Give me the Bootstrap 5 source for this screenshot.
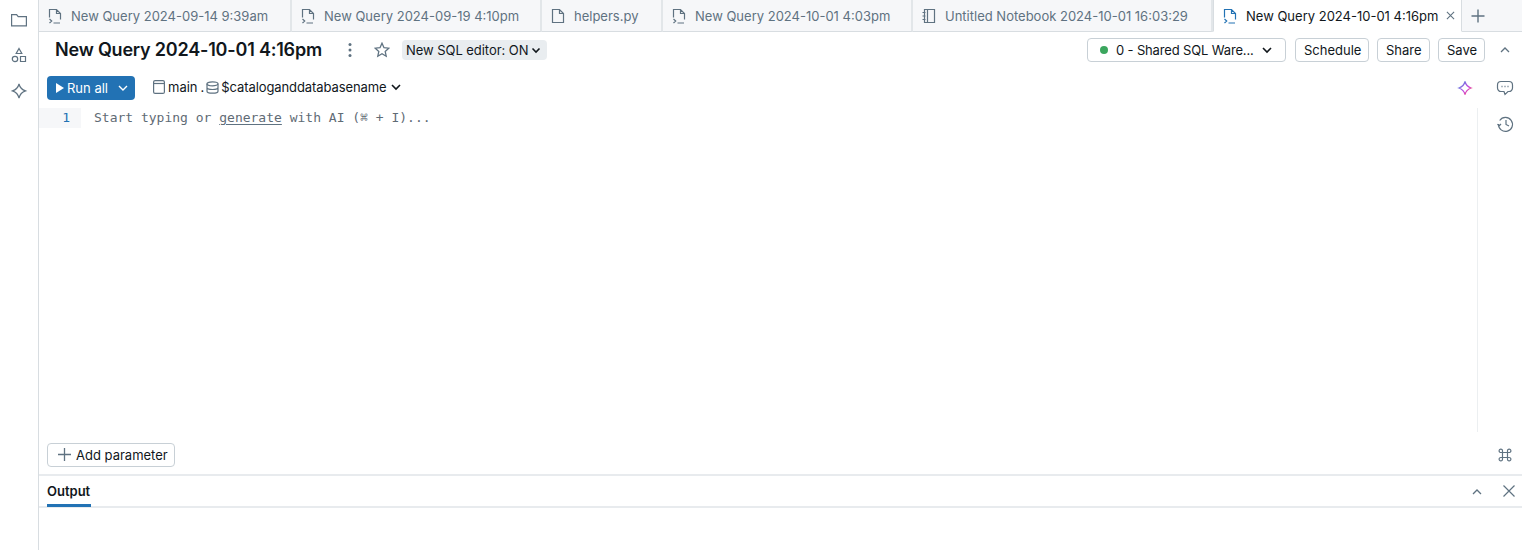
<!doctype html>
<html lang="en"><head><meta charset="utf-8"><title>SQL Editor</title>
<link href="https://cdn.jsdelivr.net/npm/bootstrap@5.3.0/dist/css/bootstrap.min.css" rel="stylesheet">
<style>
html,body{height:550px;overflow:hidden;background:#fff}
body{font-family:Inter,"Noto Sans",sans-serif;font-size:13px;color:#11171c;line-height:20px}
svg{display:block;flex:none;fill:none;stroke:currentColor;stroke-width:1.2}
.rail{width:39px;border-right:1px solid #d8dde1;padding:11px 1px 0 0;gap:17.500px;color:#5f7281}
.tabbar{height:32px;background:#f6f7f9;border-bottom:1px solid #d8dde1;flex:none}
.qtab{height:32px;border-right:2px solid #e2e6e9;padding-left:8px;gap:8px;color:#5f7281;white-space:nowrap;border-bottom:1px solid #d8dde1}
.qtab.on{background:#fff;color:#11171c;border-bottom-color:#fff;border-left:1px solid #d8dde1;border-right:1px solid #d8dde1}
.qtab.on svg.fi{color:#2272b4}
.addtab{width:35px;color:#5f7281;padding-left:8px}
.title{font-size:18px;font-weight:600;line-height:24px;letter-spacing:-.2px;margin-left:16px;width:267px;white-space:nowrap}
.head{height:38px;flex:none;padding-bottom:2px}
.pill{background:#e9edf0;border-radius:4px;height:20px;padding:0 6px 0 4px;margin-left:12px;gap:3px;white-space:nowrap;letter-spacing:-.05px}
.obtn{height:24px;border:1px solid #c8d0d6;border-radius:4px;background:#fff;color:#11171c;font-size:13px;line-height:22px;padding:0 8px;white-space:nowrap}
.runbar{height:38px;flex:none;padding:3px 0 0 8px}
.runbtn{width:88px;height:24px;background:#2272b4;color:#fff;border-radius:4px;padding:0 7px 0 9px}
.crumb{margin-left:18px;gap:3px;white-space:nowrap;color:#11171c}
.crumb svg{color:#5f7281}
.crumbname{letter-spacing:-.09px}
.gutter{width:42px;height:20px;background:#f6f7f9;color:#2272b4;text-align:right;padding-right:11px;flex:none}
.code{font-family:"DejaVu Sans Mono","Liberation Mono",monospace;font-size:13px;line-height:20px}
.hint{color:#5f6b75;margin-left:13px;white-space:nowrap}
.hint u{text-decoration-color:#5f7281;text-underline-offset:2px}
.sideicons{width:44px;flex:none;color:#5f7281;padding:7px 0 0 10px}
.editor{flex:1 1 auto;min-height:0}
.gutline{width:1px;background:#eceff1;flex:none}
.param{height:42px;flex:none;padding:3px 0 0 8px}
.outbar{height:34px;flex:none;border-top:2px solid #e8ebee;border-bottom:2px solid #e8ebee}
.outlabel{font-weight:600;margin-left:8px;height:31px;border-bottom:3px solid #2272b4;width:44px;white-space:nowrap;line-height:30px}
.gray{color:#5f7281}
</style></head><body>
<div class="d-flex" style="height:550px">
 <nav class="rail d-flex flex-column align-items-center flex-shrink-0">
  <svg width="18" height="18" viewBox="0 0 18 18"><path d="M1.600 3.600h5l1.600 2h8.200v9.200H1.600z"/></svg>
  <svg width="18" height="18" viewBox="0 0 18 18"><path d="M9 1.500l2.800 5H6.200z"/><circle cx="5" cy="12" r="2.700"/><path d="M10.500 9.500h5v5h-5z"/></svg>
  <svg width="18" height="18" viewBox="0 0 18 18"><path d="M9 2c1 4 2.500 5.500 6.500 6.900C11.500 10.300 10 11.800 9 16 8 11.800 6.500 10.300 2.500 8.900 6.500 7.500 8 6 9 2z"/></svg>
 </nav>
 <div class="flex-grow-1 d-flex flex-column" style="min-width:0">
  <div class="tabbar d-flex">
   <div class="qtab d-flex align-items-center" style="width:253px"><svg class="fi" width="16" height="16" viewBox="0 0 16 16"><use href="#qi"/></svg><span>New Query 2024-09-14 9:39am</span></div>
   <div class="qtab d-flex align-items-center" style="width:250px"><svg class="fi" width="16" height="16" viewBox="0 0 16 16"><use href="#qi"/></svg><span>New Query 2024-09-19 4:10pm</span></div>
   <div class="qtab d-flex align-items-center" style="width:121px"><svg class="fi" width="16" height="16" viewBox="0 0 16 16"><path d="M2.500 1.500h7l4 4v9h-11zM9.500 1.500v4h4"/></svg><span>helpers.py</span></div>
   <div class="qtab d-flex align-items-center" style="width:250px"><svg class="fi" width="16" height="16" viewBox="0 0 16 16"><use href="#qi"/></svg><span>New Query 2024-10-01 4:03pm</span></div>
   <div class="qtab d-flex align-items-center" style="width:300px"><svg class="fi" width="16" height="16" viewBox="0 0 16 16"><path d="M3.500 1.500h10v13h-10zM6.500 1.500v13M1.500 4.500h3M1.500 8h3M1.500 11.500h3"/></svg><span>Untitled Notebook 2024-10-01 16:03:29</span></div>
   <div class="qtab on d-flex align-items-center" style="width:249px"><svg class="fi" width="16" height="16" viewBox="0 0 16 16"><use href="#qi"/></svg><span>New Query 2024-10-01 4:16pm</span><svg class="ms-auto me-2 gray" width="9" height="9" viewBox="0 0 10 10"><path d="M1 1l8 8M9 1l-8 8"/></svg></div>
   <div class="addtab d-flex align-items-center"><svg width="16" height="16" viewBox="0 0 16 16" style="stroke-width:1.400"><path d="M8 1.500v13M1.500 8h13"/></svg></div>
  </div>
  <div class="head d-flex align-items-center">
   <div class="title">New Query 2024-10-01 4:16pm</div>
   <svg class="gray" width="16" height="16" viewBox="0 0 16 16" style="fill:currentColor;stroke:none;margin-left:20px"><circle cx="8" cy="2.500" r="1.500"/><circle cx="8" cy="8" r="1.500"/><circle cx="8" cy="13.500" r="1.500"/></svg>
   <svg class="gray" width="16" height="16" viewBox="0 0 16 16" style="margin-left:16px;stroke-width:1.300"><path d="M8 1.200l2 4.500 4.800.500-3.600 3.200 1 4.800L8 11.800l-4.200 2.400 1-4.800L1.200 6.200 6 5.700z"/></svg>
   <div class="pill d-flex align-items-center">New SQL editor: ON <svg width="10" height="10" viewBox="0 0 10 10" style="stroke-width:1.600"><path d="M1.500 3.500L5 7l3.500-3.500"/></svg></div>
   <div class="ms-auto d-flex align-items-center">
    <button class="obtn d-flex align-items-center" style="width:199px;padding-left:11px"><svg width="10" height="10" viewBox="0 0 10 10" style="fill:#3ba65e;stroke:none"><circle cx="5" cy="5" r="4"/></svg><span style="margin-left:7px;letter-spacing:-.15px">0 - Shared SQL Ware...</span><svg class="ms-auto me-1" width="12" height="12" viewBox="0 0 12 12" style="stroke-width:1.600"><path d="M2 4l4 4 4-4"/></svg></button>
    <button class="obtn" style="margin-left:9px;width:74px">Schedule</button>
    <button class="obtn" style="margin-left:8px;width:53px">Share</button>
    <button class="obtn" style="margin-left:8px;width:47px">Save</button>
    <svg class="gray" width="10" height="10" viewBox="0 0 10 10" style="margin:0 12px 0 15px;stroke-width:1.300"><path d="M1 7l4-4 4 4"/></svg>
   </div>
  </div>
  <div class="runbar d-flex align-items-start">
   <div class="runbtn d-flex align-items-center" style="margin-top:3px"><svg width="8" height="10" viewBox="0 0 8 10" style="fill:#fff;stroke:none"><path d="M0 0l8 5-8 5z"/></svg><span style="margin-left:3px">Run all</span><svg class="ms-auto" width="10" height="10" viewBox="0 0 10 10" style="stroke-width:1.400"><path d="M1 3l4 4 4-4"/></svg></div>
   <div class="crumb d-flex align-items-center" style="margin-top:2px;height:24px">
    <svg width="12" height="14" viewBox="0 0 12 14"><rect x=".6" y=".6" width="10.800" height="12.800" rx="1.500"/><path d="M.6 3.500h10.800"/></svg><span>main</span><span>.</span>
    <svg width="13" height="13" viewBox="0 0 13 13" style="margin-left:-1px"><ellipse cx="6.500" cy="2.800" rx="5.500" ry="2"/><path d="M1 2.800v7.400c0 1.100 2.500 2 5.500 2s5.500-.9 5.500-2V2.800M1 6.500c0 1.100 2.500 2 5.500 2s5.500-.9 5.500-2"/></svg><span class="crumbname" style="margin-left:-1px">$cataloganddatabasename</span>
    <svg width="10" height="10" viewBox="0 0 10 10" style="color:#11171c;stroke-width:1.600;margin-left:1px"><path d="M1 3l4 4 4-4"/></svg>
   </div>
   <div class="ms-auto d-flex align-items-center" style="margin-top:3px;height:24px">
    <svg width="16" height="16" viewBox="0 0 16 16" style="margin-right:23px;stroke-width:1.300"><defs><linearGradient id="ai" x1="0" y1="0" x2="1" y2="1"><stop offset="0" stop-color="#4299e0"/><stop offset=".6" stop-color="#ca42e0"/><stop offset="1" stop-color="#ff5f46"/></linearGradient></defs><path stroke="url(#ai)" d="M8 1.500c.8 3.500 2 5 6 6.500-4 1.500-5.200 3-6 6.500-.8-3.500-2-5-6-6.500 4-1.500 5.200-3 6-6.500z"/></svg>
    <svg class="gray" width="18" height="18" viewBox="0 0 18 18" style="margin-right:8px"><path d="M5 2.500h8A3.500 3.500 0 0 1 16.500 6v3A3.500 3.500 0 0 1 13 12.500h-1L9 15.500 8 12.500H5A3.500 3.500 0 0 1 1.500 9V6A3.500 3.500 0 0 1 5 2.500z"/><path d="M5.500 7.500h1M8.500 7.500h1M11.500 7.500h1" stroke-width="1.400"/></svg>
   </div>
  </div>
  <div class="editor d-flex">
   <div class="flex-grow-1 d-flex align-items-start code" style="min-width:0"><div class="gutter">1</div><div class="hint">Start typing or <u>generate</u> with AI (⌘ + I)...</div></div>
   <div class="gutline"></div>
   <div class="sideicons d-flex flex-column align-items-center"><svg width="18" height="18" viewBox="0 0 18 18"><path d="M3.200 5.500A7 7 0 1 1 2 9M1 9l1.500 2L4.500 9M9.500 5v4.500l3 1.500" transform="translate(.5 0)"/></svg></div>
  </div>
  <div class="param d-flex align-items-center justify-content-between">
   <button class="obtn d-flex align-items-center" style="width:128px;padding-left:9px"><svg class="gray" width="15" height="15" viewBox="0 0 15 15" style="stroke-width:1.300"><path d="M7.500 1v13M1 7.500h13"/></svg><span style="margin-left:4px">Add parameter</span></button>
   <svg class="gray" width="14" height="14" viewBox="0 0 14 14" style="margin-right:10px"><path d="M4.500 4.500h5v5h-5zM4.500 4.500H3A1.700 1.700 0 1 1 4.500 3zM9.500 4.500V3A1.700 1.700 0 1 1 11 4.500zM9.500 9.500H11A1.700 1.700 0 1 1 9.500 11zM4.500 9.500V11A1.700 1.700 0 1 1 3 9.500z"/></svg>
  </div>
  <div class="outbar d-flex align-items-start">
   <div class="outlabel">Output</div>
   <svg class="gray ms-auto" width="10" height="10" viewBox="0 0 10 10" style="margin-top:11px;stroke-width:1.300"><path d="M1 7l4-4 4 4"/></svg>
   <svg class="gray" width="14" height="14" viewBox="0 0 14 14" style="margin:8px 6px 0 20px"><path d="M1.500 1.500l11 11M12.500 1.500l-11 11"/></svg>
  </div>
  <div style="height:42px;flex:none"></div>
 </div>
</div>
<svg width="0" height="0" style="position:absolute"><symbol id="qi" viewBox="0 0 16 16"><path d="M2.500 9.500V1.500h7l4 4v6M9.500 1.500v4h4M2.500 11l2.200 2-2.200 2M6.500 15h6.500"/></symbol></svg>
<script src="https://cdn.jsdelivr.net/npm/bootstrap@5.3.0/dist/js/bootstrap.bundle.min.js"></script>
</body></html>
